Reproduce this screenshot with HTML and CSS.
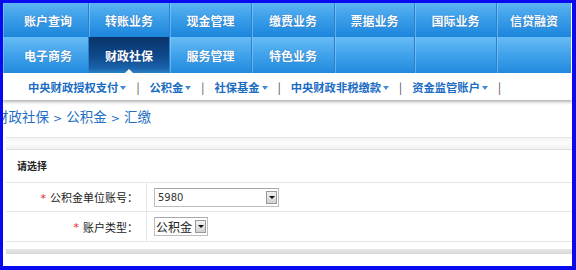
FILE: index.html
```html
<!DOCTYPE html>
<html lang="zh-CN">
<head>
<meta charset="utf-8">
<title>财政社保 - 公积金 - 汇缴</title>
<link rel="stylesheet" href="styles.css">
</head>
<body>
<div class="page">
  <nav class="nav">
    <div class="nav-row row1">
      <a class="tab w1">账户查询</a>
      <a class="tab w2">转账业务</a>
      <a class="tab w3">现金管理</a>
      <a class="tab w4">缴费业务</a>
      <a class="tab w5">票据业务</a>
      <a class="tab w6">国际业务</a>
      <a class="tab w7">信贷融资</a>
    </div>
    <div class="nav-row row2">
      <a class="tab w1">电子商务</a>
      <a class="tab w2 active">财政社保</a>
      <a class="tab w3">服务管理</a>
      <a class="tab w4">特色业务</a>
      <a class="tab w5"></a>
      <a class="tab w6"></a>
      <a class="tab w7"></a>
    </div>
  </nav>
  <div class="subnav">
    <a class="sub">中央财政授权支付<i class="caret"></i></a><span class="sep">|</span>
    <a class="sub">公积金<i class="caret"></i></a><span class="sep">|</span>
    <a class="sub">社保基金<i class="caret"></i></a><span class="sep">|</span>
    <a class="sub">中央财政非税缴款<i class="caret"></i></a><span class="sep">|</span>
    <a class="sub">资金监管账户<i class="caret"></i></a><span class="sep">|</span>
  </div>
  <div class="crumbs">
    <span>财政社保</span><span class="gt">&gt;</span><span>公积金</span><span class="gt">&gt;</span><span>汇缴</span>
  </div>
  <div class="panel">
    <div class="panel-head"></div>
    <div class="panel-title">请选择</div>
    <div class="form-row r1">
      <div class="label"><span class="star">*</span>公积金单位账号：</div>
      <div class="field">
        <span class="select s1"><span class="val num">5980</span><span class="btn"><i></i></span></span>
      </div>
    </div>
    <div class="form-row r2">
      <div class="label"><span class="star">*</span>账户类型：</div>
      <div class="field">
        <span class="select s2"><span class="val">公积金</span><span class="btn"><i></i></span></span>
      </div>
    </div>
    <div class="panel-foot"></div>
    <div class="panel-shadow"></div>
  </div>
</div>
<div class="frame"></div>
</body>
</html>
```
FILE: styles.css
```css
html, body {
  margin: 0;
  padding: 0;
}
body {
  width: 576px;
  height: 270px;
  overflow: hidden;
  background: #fff;
  font-family: "Noto Sans CJK SC", "Noto Sans", sans-serif;
  position: relative;
}
.frame {
  position: absolute;
  left: 0;
  top: 0;
  width: 576px;
  height: 270px;
  box-sizing: border-box;
  border-style: solid;
  border-color: #0a0af0;
  border-width: 3px 4px 4px 3px;
  pointer-events: none;
}
.page {
  padding: 3px 4px 0 3px;
}
.nav {
  width: 568px;
}
.nav-row {
  display: flex;
}
.row1 { height: 34px; }
.row2 { height: 36px; }
.tab {
  display: flex;
  align-items: center;
  justify-content: center;
  box-sizing: border-box;
  color: #fff;
  font-size: 12px;
  font-weight: bold;
  text-shadow: 0 0 1px rgba(0, 40, 110, 0.5);
  background: linear-gradient(#5cb3f1 0%, #3b9ee9 45%, #1c86dc 100%);
  border-right: 1px solid #2a82cf;
  box-shadow: inset 1px 0 0 rgba(160, 215, 255, 0.45);
  position: relative;
}
.row2 .tab {
  background: linear-gradient(#67bcf4 0%, #43a4ec 45%, #218ade 100%);
  padding-top: 1px;
}
.w1 { width: 86px; padding-left: 5px; }
.w2 { width: 81px; }
.w3 { width: 82px; }
.w4 { width: 83px; }
.w5 { width: 80px; }
.w6 { width: 82px; }
.w7 { width: 74px; border-right: 0; }
.row2 .tab.active {
  background: linear-gradient(#0b346c 0%, #0f4a8c 55%, #1a64ad 88%, #2b86c6 100%);
  box-shadow: none;
}
.active::after {
  content: "";
  position: absolute;
  left: 36px;
  bottom: 0;
  border-left: 4px solid transparent;
  border-right: 4px solid transparent;
  border-bottom: 4px solid #fff;
}
.subnav {
  height: 27px;
  display: flex;
  align-items: center;
  padding-left: 25px;
  background: #fff;
  box-shadow: 0 2px 3px rgba(0, 0, 0, 0.3);
  position: relative;
  font-size: 11.3px;
  font-weight: bold;
  color: #1a6cc3;
}
.sub {
  display: flex;
  align-items: center;
  white-space: nowrap;
}
.caret {
  display: inline-block;
  margin-left: 2px;
  margin-top: 2px;
  border-left: 3px solid transparent;
  border-right: 3px solid transparent;
  border-top: 4px solid #4a8ad2;
}
.sep {
  color: #444;
  font-weight: normal;
  margin: 0 10px;
}
.crumbs {
  height: 37px;
  line-height: 32px;
  margin-left: -8px;
  font-size: 13.5px;
  color: #1f6fc2;
  white-space: nowrap;
}
.gt {
  font-family: "DejaVu Sans", sans-serif;
  font-size: 11px;
  margin: 0 4px;
}
.panel {
  margin-left: 3px;
}
.panel-head {
  height: 11px;
  border-top: 1px solid #e6e6e6;
  border-bottom: 1px solid #dedede;
  background: linear-gradient(#f6f6f6, #fbfbfb 50%, #f2f2f2);
}
.panel-title {
  height: 32px;
  line-height: 32px;
  padding-left: 11px;
  font-size: 10px;
  font-weight: bold;
  color: #222;
  border-bottom: 1px solid #e6e6e6;
}
.form-row {
  display: grid;
  grid-template-columns: 141px 1fr;
  border-bottom: 1px solid #e6e6e6;
}
.r1 { height: 28px; }
.r2 { height: 29px; }
.label {
  display: flex;
  align-items: center;
  justify-content: flex-end;
  padding-right: 8px;
  border-right: 1px solid #e6e6e6;
  font-size: 11px;
  color: #222;
  white-space: nowrap;
}
.star {
  color: #e02828;
  font-family: "DejaVu Sans", sans-serif;
  font-size: 11px;
  margin-right: 4px;
  position: relative;
  top: 1px;
}
.field {
  display: flex;
  align-items: center;
  padding-left: 7px;
}
.select {
  display: flex;
  align-items: center;
  box-sizing: border-box;
  height: 19px;
  border: 1px solid #bdbdbd;
  border-top-color: #a8a8a8;
  background: #fff;
  position: relative;
}
.s1 { width: 125px; }
.s2 { width: 54px; }
.val {
  flex: 1;
  padding-left: 3px;
  color: #222;
  font-size: 12px;
  white-space: nowrap;
}
.s2 .val {
  padding-left: 1px;
}
.num {
  font-family: "DejaVu Sans", sans-serif;
  font-size: 10px;
  color: #333;
}
.btn {
  flex: none;
  width: 11px;
  height: 13px;
  margin-right: 1px;
  box-sizing: border-box;
  border: 1px solid #9a9a9a;
  background: linear-gradient(#f2f2f2, #d2d2d2);
  display: flex;
  align-items: center;
  justify-content: center;
}
.btn i {
  display: block;
  border-left: 3px solid transparent;
  border-right: 3px solid transparent;
  border-top: 3px solid #111;
}
.panel-foot {
  height: 7px;
}
.panel-shadow {
  height: 5px;
  background: linear-gradient(#e6e6e6, #d8d8d8);
}
```
